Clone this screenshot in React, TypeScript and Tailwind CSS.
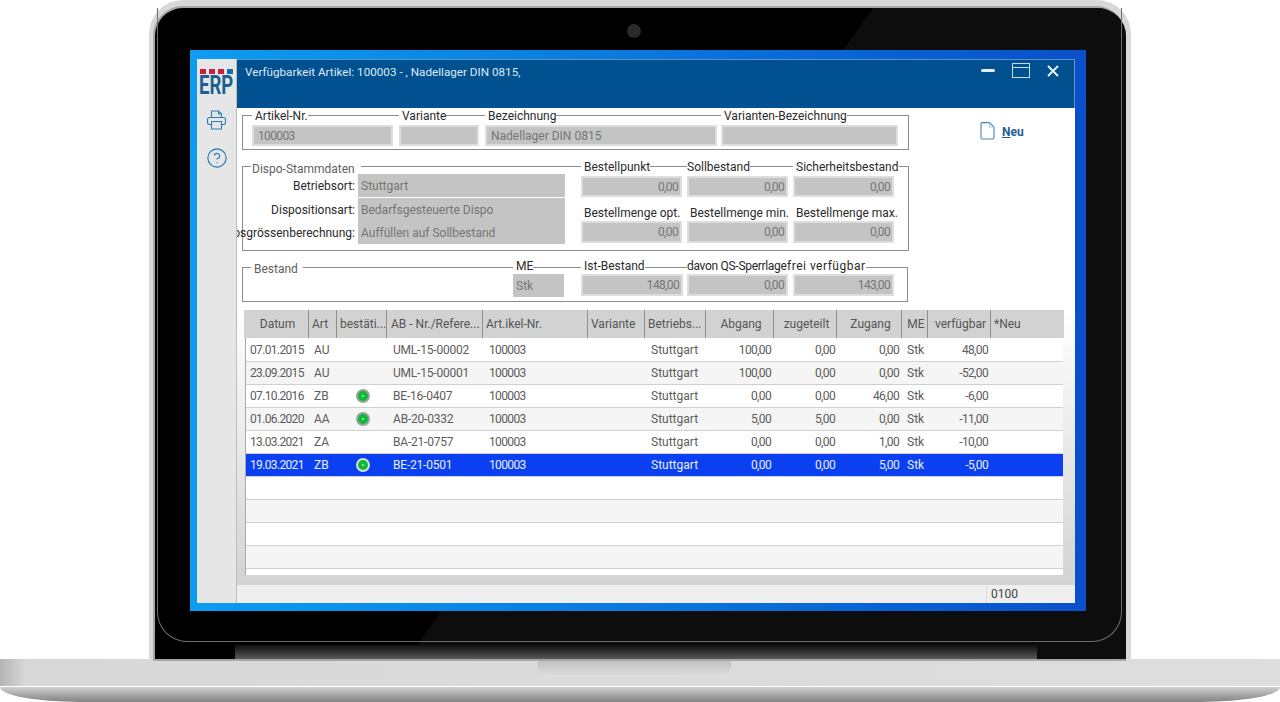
import React from 'react';
import { CircleHelp } from 'lucide-react';

const tableCols = 'grid-cols-[63px_28px_50px_96px_105px_57px_61px_68px_63px_65px_26px_63px_72px]';
const headCols = 'grid-cols-[65px_28px_50px_96px_105px_57px_61px_68px_63px_65px_26px_63px_73px]';
// digits in the original font are narrower than Roboto's
const num = 'tracking-[-0.65px]';

const rows = [
  { date: '07.01.2015', art: 'AU', ok: false, ref: 'UML-15-00002', abgang: '100,00', zugeteilt: '0,00', zugang: '0,00', verf: '48,00' },
  { date: '23.09.2015', art: 'AU', ok: false, ref: 'UML-15-00001', abgang: '100,00', zugeteilt: '0,00', zugang: '0,00', verf: '-52,00' },
  { date: '07.10.2016', art: 'ZB', ok: true, ref: 'BE-16-0407', abgang: '0,00', zugeteilt: '0,00', zugang: '46,00', verf: '-6,00' },
  { date: '01.06.2020', art: 'AA', ok: true, ref: 'AB-20-0332', abgang: '5,00', zugeteilt: '5,00', zugang: '0,00', verf: '-11,00' },
  { date: '13.03.2021', art: 'ZA', ok: false, ref: 'BA-21-0757', abgang: '0,00', zugeteilt: '0,00', zugang: '1,00', verf: '-10,00' },
  { date: '19.03.2021', art: 'ZB', ok: true, ref: 'BE-21-0501', abgang: '0,00', zugeteilt: '0,00', zugang: '5,00', verf: '-5,00' },
];

const Legend = ({ children, className = '' }: { children: React.ReactNode; className?: string }) => (
  <div className={`h-[14px] w-fit whitespace-nowrap bg-white pl-[3px] text-[12px] leading-[14px] text-[#2a2a2a] ${className}`}>
    {children}
  </div>
);

const Input = ({ value, right, className = '' }: { value?: string; right?: boolean; className?: string }) => (
  <div
    className={`flex items-center border-2 border-[#dedede] bg-[#c4c4c4] pl-[4px] pr-[2px] text-[12px] text-[#757575] ${
      right ? `justify-end ${num}` : ''
    } ${className}`}
  >
    {value}
  </div>
);

const Bullet = ({ selected }: { selected: boolean }) => (
  <div
    className={`mx-auto flex h-[14px] w-[14px] items-center justify-center rounded-full border-2 bg-[#12b83a] ${
      selected ? 'border-[#cfe3cf]' : 'border-[#9aa59a]'
    }`}
  >
    <div className="h-[2px] w-[2px] rounded-full bg-[#a8f0b8]" />
  </div>
);

const DataRow = ({ row, index }: { row: (typeof rows)[number]; index: number }) => {
  const selected = index === 5;
  const bg = selected ? 'bg-[#0b3ff2] text-[#e8efff]' : index % 2 === 0 ? 'bg-white text-[#5c5c5c]' : 'bg-[#f5f5f5] text-[#5c5c5c]';
  return (
    <div className={`grid h-[23px] ${tableCols} items-center border-b border-[#d0d0d0] text-[12px] ${bg}`}>
      <div className={`pl-[4px] ${num}`}>{row.date}</div>
      <div className="pl-[5px]">{row.art}</div>
      <div className="pl-[2px]">{row.ok && <Bullet selected={selected} />}</div>
      <div className="pl-[6px] tracking-[-0.2px]">{row.ref}</div>
      <div className={`pl-[6px] ${num}`}>100003</div>
      <div />
      <div className="pl-[6px]">Stuttgart</div>
      <div className={`pr-[3px] text-right ${num}`}>{row.abgang}</div>
      <div className={`pr-[2px] text-right ${num}`}>{row.zugeteilt}</div>
      <div className={`pr-[3px] text-right ${num}`}>{row.zugang}</div>
      <div className="pl-[5px]">Stk</div>
      <div className={`pr-[3px] text-right ${num}`}>{row.verf}</div>
      <div />
    </div>
  );
};

const EmptyRow = ({ index }: { index: number }) => (
  <div className={`h-[23px] border-b border-[#d0d0d0] ${index % 2 === 0 ? 'bg-white' : 'bg-[#f5f5f5]'}`} />
);

const HeadCell = ({ children, center, last, className = '' }: { children: string; center?: boolean; last?: boolean; className?: string }) => (
  <div className={`flex items-center whitespace-nowrap pl-[3px] ${center ? 'justify-center' : ''} ${last ? '' : 'border-r border-[#8f8f8f]'} ${className}`}>
    {children}
  </div>
);

const Sidebar = () => (
  <div className="flex w-[40px] shrink-0 flex-col items-center border-r border-[#bdbdbd] bg-[#e6e6e6] pt-[10px]">
    <div className="flex gap-[3px]">
      <div className="h-[5px] w-[6px] bg-[#c8203f]" />
      <div className="h-[5px] w-[6px] bg-[#c8203f]" />
      <div className="h-[5px] w-[6px] bg-[#c8203f]" />
      <div className="h-[5px] w-[6px] bg-[#1d6ca8]" />
    </div>
    <div className="mt-[1px] h-[22px] origin-center scale-x-[0.74] text-[25px] font-bold leading-[22px] text-[#1c5f94]">ERP</div>
    <svg className="mt-[13px] h-[20px] w-[19px]" viewBox="0 0 19 20" fill="none" stroke="#2b7db5" strokeWidth="1.1">
      <path d="M4.5 7.5V1h7l3 3v3.5" />
      <path d="M11.5 1v3h3" />
      <path d="M4 14.5H2.5a2 2 0 0 1-2-2V9.5a2 2 0 0 1 2-2h14a2 2 0 0 1 2 2v3a2 2 0 0 1-2 2H15" />
      <path d="M4.5 11.5h10v7.5h-10z" />
    </svg>
    <CircleHelp className="mt-[17px] h-[22px] w-[22px] text-[#1f76b0]" strokeWidth={1.2} />
  </div>
);

const Header = () => (
  <div className="flex h-[49px] shrink-0 border-t border-r border-[#5f93c4] bg-[#01508f]">
    <div className="pl-[8px] pt-[5px] text-[11.7px] leading-[14px] text-[#dcebf7]">
      Verfügbarkeit Artikel: 100003 - , Nadellager DIN 0815,
    </div>
    <div className="ml-auto flex items-start pr-[15px] pt-[3px]">
      <div className="mt-[6px] h-[2.5px] w-[14px] rounded-full bg-[#e4eef6]" />
      <div className="ml-[17px] h-[15px] w-[18px] border border-[#c8dbea] pt-[3px]">
        <div className="border-t border-[#c8dbea]" />
      </div>
      <svg className="ml-[17px] mt-[2px] h-[12px] w-[12px]" viewBox="0 0 12 12" stroke="#f1f6fa" strokeWidth="1.8">
        <path d="M1 1l10 10M11 1L1 11" />
      </svg>
    </div>
  </div>
);

const ArticleBox = () => (
  <div className="flex">
    <div className="ml-[5px] flex h-[35px] w-[667px] gap-[6px] border border-[#8c8c8c] pl-[9px]">
      <div className="-mt-[7px] w-[141px]">
        <Legend>Artikel-Nr.</Legend>
        <Input value="100003" className={`mt-[2px] h-[21px] ${num}`} />
      </div>
      <div className="-mt-[7px] w-[80px]">
        <Legend>Variante</Legend>
        <Input className="mt-[2px] h-[21px]" />
      </div>
      <div className="-mt-[7px] w-[232px]">
        <Legend>Bezeichnung</Legend>
        <Input value="Nadellager DIN 0815" className="mt-[2px] h-[21px]" />
      </div>
      <div className="-ml-[2px] -mt-[7px] w-[177px]">
        <Legend>Varianten-Bezeichnung</Legend>
        <Input className="mt-[2px] h-[21px]" />
      </div>
    </div>
    <div className="ml-[71px] mt-[7px] flex h-[18px] items-center gap-[7px]">
      <svg className="h-[18px] w-[15px]" viewBox="0 0 15 18" fill="none" stroke="#3f86bd" strokeWidth="1.1">
        <path d="M1 2a1.4 1.4 0 0 1 1.4-1.4H9.5L14 5v10.6a1.4 1.4 0 0 1-1.4 1.4H2.4A1.4 1.4 0 0 1 1 15.6z" />
        <path d="M9.5.8V5H14" stroke="#a9c9e0" />
      </svg>
      <span className="mt-[2px] text-[12px] font-bold text-[#1d5c99]">
        <span className="underline">N</span>eu
      </span>
    </div>
  </div>
);

const DispoLabelRow = ({ label, value, className = '' }: { label: string; value: string; className?: string }) => (
  <div className={`flex h-[23px] ${className}`}>
    <div className="flex w-[112px] items-center justify-end whitespace-nowrap text-[12px] text-[#2a2a2a]">{label}</div>
    <div className="ml-[3px] flex w-[207px] items-center bg-[#c4c4c4] pl-[3px] text-[12px] text-[#757575]">{value}</div>
  </div>
);

const DispoBox = () => (
  <div className="ml-[5px] mt-[16px] flex h-[85px] w-[667px] border border-[#8c8c8c]">
    <div className="w-[338px]">
      <div className="-mt-[5px] ml-[8px] h-[14px] w-[110px] bg-white pl-[1px] text-[12px] leading-[14px] text-[#5f5f5f]">Dispo-Stammdaten</div>
      <DispoLabelRow label="Betriebsort:" value="Stuttgart" className="-mt-[2px]" />
      <DispoLabelRow label="Dispositionsart:" value="Bedarfsgesteuerte Dispo" className="mt-[1px]" />
      <DispoLabelRow label="Losgrössenberechnung:" value="Auffüllen auf Sollbestand" />
    </div>
    <div className="-mt-[7px] grid grid-cols-[101px_101px_101px] gap-x-[5px]">
      <div>
        <Legend>Bestellpunkt</Legend>
        <Input value="0,00" right className="mt-[2px] h-[21px]" />
        <Legend className="mt-[9px]">Bestellmenge opt.</Legend>
        <Input value="0,00" right className="mt-[1px] h-[22px]" />
      </div>
      <div>
        <Legend className="pl-0!">Sollbestand</Legend>
        <Input value="0,00" right className="mt-[2px] h-[21px]" />
        <Legend className="mt-[9px]">Bestellmenge min.</Legend>
        <Input value="0,00" right className="mt-[1px] h-[22px]" />
      </div>
      <div>
        <Legend>Sicherheitsbestand</Legend>
        <Input value="0,00" right className="mt-[2px] h-[21px]" />
        <Legend className="mt-[9px]">Bestellmenge max.</Legend>
        <Input value="0,00" right className="mt-[1px] h-[22px]" />
      </div>
    </div>
  </div>
);

const StockBox = () => (
  <div className="ml-[5px] mt-[16px] flex h-[35px] w-[666px] border border-[#8c8c8c]">
    <div className="-mt-[6px] ml-[8px] h-[14px] w-[52px] bg-white pl-[3px] text-[12px] leading-[14px] text-[#5f5f5f]">Bestand</div>
    <div className="-mt-[9px] ml-[210px] w-[51px]">
      <Legend>ME</Legend>
      <div className="mt-[1px] flex h-[23px] items-center bg-[#c4c4c4] pl-[3px] text-[12px] text-[#757575]">Stk</div>
    </div>
    <div className="-mt-[9px] ml-[17px] w-[102px]">
      <Legend>Ist-Bestand</Legend>
      <Input value="148,00" right className="mt-[1px] h-[22px]" />
    </div>
    <div className="-mt-[9px] ml-[4px] w-[101px]">
      <Legend className="pl-0! tracking-[-0.3px]">davon QS-Sperrlager</Legend>
      <Input value="0,00" right className="mt-[1px] h-[22px]" />
    </div>
    <div className="-mt-[9px] ml-[5px] w-[101px]">
      <Legend className="-ml-[6px] pl-0! tracking-[0.5px]">frei verfügbar</Legend>
      <Input value="143,00" right className="mt-[1px] h-[22px]" />
    </div>
  </div>
);

const MovementsTable = () => (
  <div className="mt-[8px] h-[275px] shrink-0 bg-linear-to-b from-white to-[#d3d3d3] pb-[10px]">
    <div className={`ml-[7px] grid h-[28px] w-[820px] ${headCols} bg-[#d2d2d2] text-[12px] text-[#555555]`}>
      <HeadCell center>Datum</HeadCell>
      <HeadCell>Art</HeadCell>
      <HeadCell>bestäti...</HeadCell>
      <HeadCell className="pl-[4px]!">AB - Nr./Refere...</HeadCell>
      <HeadCell>Art.ikel-Nr.</HeadCell>
      <HeadCell>Variante</HeadCell>
      <HeadCell>Betriebs...</HeadCell>
      <HeadCell center>Abgang</HeadCell>
      <HeadCell center>zugeteilt</HeadCell>
      <HeadCell center>Zugang</HeadCell>
      <HeadCell center>ME</HeadCell>
      <HeadCell center>verfügbar</HeadCell>
      <HeadCell last>*Neu</HeadCell>
    </div>
    <div className="ml-[8px] h-[237px] w-[818px] overflow-hidden border-l border-[#a8a8a8] bg-white pt-[1px]">
      {rows.map((row, i) => (
        <DataRow key={row.ref} row={row} index={i} />
      ))}
      {[6, 7, 8, 9, 10].map((i) => (
        <EmptyRow key={i} index={i} />
      ))}
    </div>
  </div>
);

const StatusBar = () => (
  <div className="flex h-[18px] shrink-0 justify-end bg-[#efefef]">
    <div className="w-[89px] border-l border-[#dcdcdc] pl-[4px] text-[12px] leading-[18px] text-[#444444]">0100</div>
  </div>
);

const ErpWindow = () => (
  <div className="relative ml-[35px] h-[561px] w-[896px] bg-linear-to-r from-[#0c9df2] via-[#0b78de] to-[#0a4fcb] pb-[8px] pl-[7px] pr-[11px] pt-[9px]">
    <div className="flex h-[544px]">
      <Sidebar />
      <div className="flex min-w-0 flex-1 flex-col overflow-hidden bg-white">
        <Header />
        <div className="shrink-0 pt-[7px]">
          <ArticleBox />
          <DispoBox />
          <StockBox />
          <MovementsTable />
        </div>
        <StatusBar />
      </div>
    </div>
  </div>
);

export default function App() {
  return (
    <div className="flex h-[702px] w-[1280px] flex-col overflow-hidden bg-white font-['Roboto',sans-serif]">
      {/* Lid */}
      <div className="mx-[149px] h-[659px] shrink-0 rounded-t-[34px] bg-[#d8d8d8] pl-[6px] pr-[7px] pt-[8px]">
        <div className="relative h-[651px] rounded-t-[28px] bg-black shadow-[0_0_0_2px_#a6a6a6]">
          <svg className="absolute left-0 top-0 h-[651px] w-[971px] rounded-tr-[28px]" viewBox="0 0 971 651">
            <polygon points="718,0 971,0 971,651 252,651" fill="#0d0d0d" />
          </svg>
          <div className="absolute left-[2px] right-[2px] top-0 h-[634px] rounded-b-[30px] border border-t-0 border-[#6e6e6e]" />
          <div className="relative flex h-[42px] items-center justify-center pt-[4px]">
            <div className="-ml-[11px] h-[14px] w-[14px] rounded-full bg-[#2b2b2b]" />
          </div>
          <ErpWindow />
          <div className="relative ml-[80px] mt-[34px] h-[14px] w-[802px] bg-linear-to-b from-[#111111] to-[#5a5a5a]" />
        </div>
      </div>
      {/* Base */}
      <div className="h-[43px] shrink-0 overflow-hidden rounded-b-[80px_15px]">
        <div className="h-[27px] bg-linear-to-r from-[#b4b4b4] via-[#d8d8d8] via-[2%] to-[#dedede]">
          <div className="ml-[538px] h-[18px] w-[193px] rounded-b-[10px] bg-linear-to-b from-[#bdbdbd] to-[#e0e0e0]" />
        </div>
        <div className="h-[1px] bg-white" />
        <div className="h-[15px] bg-linear-to-b from-[#d0d0d0] to-[#828282]" />
      </div>
    </div>
  );
}
